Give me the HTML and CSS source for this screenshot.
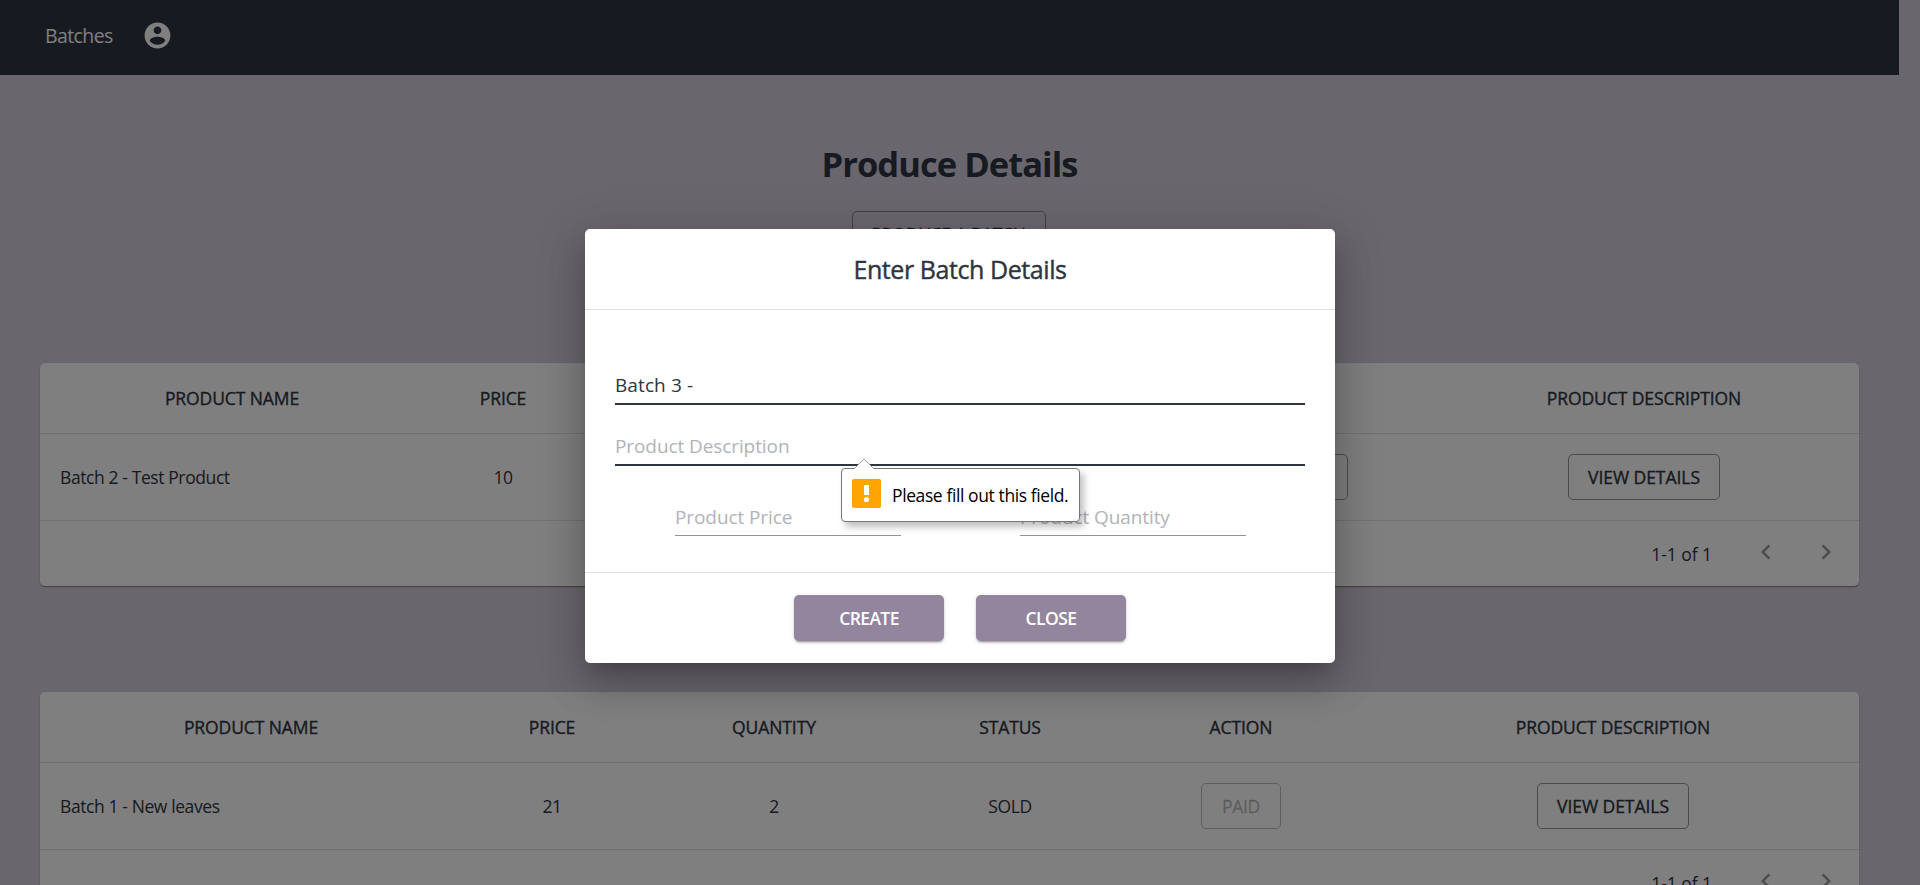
FILE: index.html
```html
<!DOCTYPE html>
<html lang="en">
<head>
<meta charset="utf-8">
<title>Produce Details</title>
<link rel="stylesheet" href="styles.css">
</head>
<body>
<div class="page">
  <nav class="navbar">
    <a class="nav-link">Batches</a>
    <svg class="nav-icon" viewBox="0 0 24 24"><path d="M12 2C6.48 2 2 6.48 2 12s4.48 10 10 10 10-4.48 10-10S17.52 2 12 2zm0 3c1.66 0 3 1.34 3 3s-1.34 3-3 3-3-1.34-3-3 1.34-3 3-3zm0 14.2c-2.5 0-4.71-1.28-6-3.22.03-1.99 4-3.08 6-3.08 1.99 0 5.97 1.09 6 3.08-1.29 1.94-3.5 3.22-6 3.22z"/></svg>
  </nav>
  <main class="content">
    <h1 class="heading">Produce Details</h1>
    <button class="btn-outlined produce">PRODUCE A BATCH</button>

    <section class="card card-open">
      <div class="row head">
        <div class="cell">PRODUCT NAME</div><div class="cell">PRICE</div><div class="cell">QUANTITY</div><div class="cell">STATUS</div><div class="cell"></div><div class="cell">PRODUCT DESCRIPTION</div>
      </div>
      <div class="row">
        <div class="cell name">Batch 2 - Test Product</div><div class="cell">10</div><div class="cell"></div><div class="cell"></div><div class="cell"><button class="btn-outlined wide"></button></div><div class="cell"><button class="btn-outlined view">VIEW DETAILS</button></div>
      </div>
      <div class="pager">
        <span class="count">1-1 of 1</span>
        <svg class="chev" viewBox="0 0 24 24"><path d="M15.41 7.41 14 6l-6 6 6 6 1.41-1.41L10.83 12z"/></svg>
        <svg class="chev" viewBox="0 0 24 24"><path d="M10 6 8.59 7.41 13.17 12l-4.58 4.59L10 18l6-6z"/></svg>
      </div>
    </section>

    <section class="card card-sold">
      <div class="row head">
        <div class="cell">PRODUCT NAME</div><div class="cell">PRICE</div><div class="cell">QUANTITY</div><div class="cell">STATUS</div><div class="cell">ACTION</div><div class="cell">PRODUCT DESCRIPTION</div>
      </div>
      <div class="row">
        <div class="cell name">Batch 1 - New leaves</div><div class="cell">21</div><div class="cell">2</div><div class="cell">SOLD</div><div class="cell"><button class="btn-outlined paid" disabled>PAID</button></div><div class="cell"><button class="btn-outlined view">VIEW DETAILS</button></div>
      </div>
      <div class="pager">
        <span class="count">1-1 of 1</span>
        <svg class="chev" viewBox="0 0 24 24"><path d="M15.41 7.41 14 6l-6 6 6 6 1.41-1.41L10.83 12z"/></svg>
        <svg class="chev" viewBox="0 0 24 24"><path d="M10 6 8.59 7.41 13.17 12l-4.58 4.59L10 18l6-6z"/></svg>
      </div>
    </section>
  </main>
</div>

<div class="backdrop">
  <div class="dialog">
    <h2 class="dialog-title">Enter Batch Details</h2>
    <div class="dialog-body">
      <div class="field active"><span class="value">Batch 3 -</span></div>
      <div class="field active second">
        <span class="hint">Product Description</span>
        <div class="bubble">
          <svg class="bubble-arrow" viewBox="0 0 20 11"><path d="M0 11 10 1 20 11" /></svg>
          <svg class="warn" viewBox="0 0 29 29"><rect width="29" height="29" rx="2"/><path d="M12 6h5v10h-5z"/><circle cx="14.500" cy="20.500" r="2.600"/></svg>
          <span class="bubble-text">Please fill out this field.</span>
        </div>
      </div>
      <div class="pair">
        <div class="field"><span class="hint">Product Price</span></div>
        <div class="field"><span class="hint">Product Quantity</span></div>
      </div>
    </div>
    <div class="dialog-actions">
      <button class="btn-filled">CREATE</button>
      <button class="btn-filled">CLOSE</button>
    </div>
  </div>
</div>
</body>
</html>
```
FILE: styles.css
```css
* { box-sizing: border-box; }
html, body { margin: 0; height: 885px; overflow: hidden; }
body {
  background: #d5cddb;
  color: #2e3440;
  font-family: "Open Sans", "Noto Sans", sans-serif;
  font-size: 17.5px;
}
button { font-family: inherit; }
.page { height: 885px; overflow: hidden; padding-right: 21px; }

.navbar {
  height: 75px;
  padding: 0 0 5px 45px;
  background: #2e3440;
  display: flex;
  align-items: center;
  gap: 29px;
}
.nav-link { color: #fff; font-size: 19.5px; letter-spacing: -0.6px; line-height: 28px; padding-top: 2px; }
.nav-icon { width: 31px; height: 31px; fill: #fff; }

.content { padding: 0 40px; display: flex; flex-direction: column; align-items: center; }
.heading { margin: 64px 0 22px; font-size: 34.5px; line-height: 50px; font-weight: 700; letter-spacing: -0.95px; }
.btn-outlined {
  height: 46px;
  padding: 0;
  border: 1px solid rgba(46, 52, 64, 0.5);
  border-radius: 5px;
  background: transparent;
  color: #2e3440;
  font-size: 17.5px;
  letter-spacing: -0.05px;
  white-space: nowrap;
  -webkit-text-stroke: 0.35px;
}
.produce { width: 194px; margin: 0 2px 106px 0; letter-spacing: -0.2px; }
.wide { width: 122px; }
.view { width: 152px; }
.paid { width: 80px; letter-spacing: -0.3px; color: rgba(0, 0, 0, 0.26); border-color: rgba(0, 0, 0, 0.26); }

.card {
  width: 1819px;
  background: #fff;
  border-radius: 5px;
  box-shadow: 0 2px 1px -1px rgba(0,0,0,.2), 0 1px 1px rgba(0,0,0,.14), 0 1px 3px rgba(0,0,0,.12);
}
.card-open { margin-bottom: 106px; }
.row { display: grid; height: 87px; border-bottom: 1px solid #e0e0e0; }
.row.head { height: 71px; }
.card-open .row { grid-template-columns: 384px 158px 242px 321px 284px 430px; }
.card-sold .row { grid-template-columns: 422px 180px 264px 208px 254px 490px; }
.cell { display: flex; align-items: center; justify-content: center; letter-spacing: -0.4px; white-space: nowrap; }
.head .cell { letter-spacing: -0.1px; -webkit-text-stroke: 0.35px; }
.name { justify-content: flex-start; padding-left: 20px; }
.pager { height: 65px; display: flex; align-items: center; justify-content: flex-end; padding: 0 18px 3px 0; }
.count { letter-spacing: -0.05px; margin-right: 39px; padding-top: 4px; }
.chev { width: 30px; height: 30px; fill: rgba(0, 0, 0, 0.4); margin-left: 30px; }
.count + .chev { margin-left: 0; }

.backdrop {
  position: absolute;
  inset: 0;
  background: rgba(0, 0, 0, 0.5);
  display: flex;
  justify-content: center;
  align-items: flex-start;
  padding-top: 229px;
}
.dialog {
  width: 750px;
  height: 434px;
  background: #fff;
  border-radius: 5px;
  box-shadow: 0 11px 15px -7px rgba(0,0,0,.2), 0 24px 38px 3px rgba(0,0,0,.14), 0 9px 46px 8px rgba(0,0,0,.12);
}
.dialog-title { margin: 0; height: 80px; line-height: 81px; text-align: center; font-size: 25px; font-weight: 400; letter-spacing: -0.42px; -webkit-text-stroke: 0.4px; }
.dialog-body { height: 264px; border-top: 1px solid #e0e0e0; border-bottom: 1px solid #e0e0e0; padding: 55px 30px 0; }
.field { height: 40px; border-bottom: 1px solid #949494; font-size: 19px; line-height: 26px; padding-top: 7px; white-space: nowrap; }
.field.active { border-bottom: 2px solid #2e3440; }
.second { position: relative; margin-top: 21px; }
.value { letter-spacing: 0.1px; }
.hint { color: #b2b3b8; letter-spacing: -0.09px; }
.pair { display: flex; gap: 119px; padding: 30px 59px 0 60px; }
.pair .field { width: 226px; flex: none; padding-top: 8px; }

/* validation message shown over the form */
.bubble {
  position: absolute;
  left: 226px;
  top: 42px;
  width: 239px;
  height: 54px;
  display: flex;
  align-items: center;
  gap: 11px;
  padding-left: 10px;
  background: #fff;
  border: 1px solid #767676;
  border-radius: 4px;
  box-shadow: 4px 5px 7px rgba(0,0,0,.25);
}
.bubble-arrow { position: absolute; left: 12px; top: -11px; width: 20px; height: 11px; fill: #fff; stroke: #a0a0a0; stroke-width: 1; }
.warn { width: 29px; height: 29px; margin-top: -3px; fill: #fff; }
.warn rect { fill: #ffa400; }
.bubble-text { color: #000; font-size: 17.5px; letter-spacing: -0.4px; }

.dialog-actions { display: flex; justify-content: center; gap: 32px; padding-top: 22px; }
.btn-filled {
  width: 150px;
  height: 46px;
  padding: 0;
  border: 0;
  border-radius: 5px;
  background: #92859d;
  color: #fff;
  font-size: 17.5px;
  font-weight: 600;
  letter-spacing: -0.6px;
  box-shadow: 0 3px 1px -2px rgba(0,0,0,.2), 0 2px 2px rgba(0,0,0,.14), 0 1px 5px rgba(0,0,0,.12);
}
```
